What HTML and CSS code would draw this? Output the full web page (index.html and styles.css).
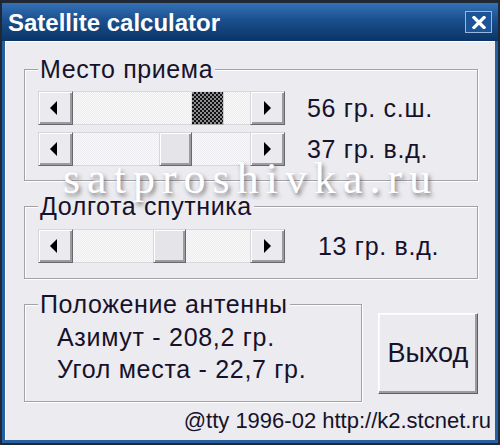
FILE: index.html
```html
<!DOCTYPE html>
<html lang="ru">

<head>
    <meta charset="UTF-8">
    <meta name="viewport" content="width=device-width, initial-scale=1.0">
    <title>Satellite calculator</title>
    <link rel="stylesheet" href="styles.css">
</head>

<body>
    <div class="window">
        <div class="titlebar">
            <span class="title">Satellite calculator</span>
            <span class="close">
                <svg width="14" height="13" viewBox="0 0 14 13">
                    <path d="M2 1.5 L12 11.5 M12 1.5 L2 11.5" stroke="#fff" stroke-width="3.2" stroke-linecap="square" />
                </svg>
            </span>
        </div>

        <div class="client">
            <fieldset class="group group-place">
                <legend>Место приема</legend>
                <div class="row">
                    <div class="scroll">
                        <span class="scroll-btn"><i class="arrow arrow-left"></i></span>
                        <span class="track"><span class="thumb thumb-focus" style="margin-left:118px"></span></span>
                        <span class="scroll-btn"><i class="arrow arrow-right"></i></span>
                    </div>
                    <span class="value">56 гр. с.ш.</span>
                </div>
                <div class="row">
                    <div class="scroll">
                        <span class="scroll-btn"><i class="arrow arrow-left"></i></span>
                        <span class="track"><span class="thumb" style="margin-left:86px"></span></span>
                        <span class="scroll-btn"><i class="arrow arrow-right"></i></span>
                    </div>
                    <span class="value">37 гр. в.д.</span>
                </div>
            </fieldset>

            <fieldset class="group group-sat">
                <legend>Долгота спутника</legend>
                <div class="row">
                    <div class="scroll">
                        <span class="scroll-btn"><i class="arrow arrow-left"></i></span>
                        <span class="track"><span class="thumb" style="margin-left:80px"></span></span>
                        <span class="scroll-btn"><i class="arrow arrow-right"></i></span>
                    </div>
                    <span class="value value-wide">13 гр. в.д.</span>
                </div>
            </fieldset>

            <div class="result">
                <fieldset class="group group-antenna">
                    <legend>Положение антенны</legend>
                    <div class="line">Азимут - 208,2 гр.</div>
                    <div class="line">Угол места - 22,7 гр.</div>
                </fieldset>
                <button class="exit" type="button">Выход</button>
            </div>

            <div class="footer">@tty 1996-02 http://k2.stcnet.ru</div>
        </div>

        <!-- надпись поверх окна -->
        <div class="watermark">satproshivka.ru</div>
    </div>
</body>

</html>
```

FILE: styles.css
```css
body {
    margin: 0;
    background: #fff;
}

.window {
    position: relative;
    width: 500px;
    height: 445px;
    box-sizing: border-box;
    display: flex;
    flex-direction: column;
    border: 2px solid #1f2834;
    border-top-width: 3px;
    background: #2660a0;
    font-family: "Liberation Sans", Arial, sans-serif;
    color: #16122c;
}

/* заголовок окна */
.titlebar {
    height: 38px;
    display: flex;
    align-items: center;
    justify-content: space-between;
    padding: 0 6px;
    background: linear-gradient(#3472b6, #1a4f8e 45%, #0b3466);
}

.title {
    font-size: 24px;
    font-weight: 700;
    color: #fff;
    padding-top: 2px;
}

.close {
    width: 25px;
    height: 20px;
    display: flex;
    align-items: center;
    justify-content: center;
    border: 1px solid #9ab8de;
    background: #1c5597;
}

.client {
    flex: 1;
    margin: 0 3px 3px;
    padding: 13px 17px 0 18px;
    background: #ecebef;
    border-top: 1px solid #fff;
    border-left: 1px solid #fff;
    box-sizing: border-box;
}

/* рамки групп */
.group {
    margin: 0;
    border: 1px solid #a3a1a7;
    box-shadow: 1px 1px 0 #fff, inset 1px 1px 0 #fff;
    padding: 8px 13px 14px;
}

.group legend {
    font-size: 25px;
    line-height: 28px;
    letter-spacing: 0.6px;
    padding: 0 2px;
    background: #ecebef;
}

.group-sat {
    margin-top: 11px;
    padding-top: 9px;
    padding-bottom: 15px;
}

.row {
    display: flex;
    align-items: center;
}

.row + .row {
    margin-top: 7px;
}

.value {
    font-size: 25px;
    letter-spacing: 0.7px;
    padding-left: 22px;
}

.value-wide {
    padding-left: 33px;
}

/* полоса прокрутки */
.scroll {
    display: flex;
    width: 247px;
    height: 34px;
}

.scroll-btn {
    width: 35px;
    box-sizing: border-box;
    display: flex;
    align-items: center;
    justify-content: center;
    background: #ebeaee;
    border: 1px solid;
    border-color: #d6d5d9 #69686d #69686d #d6d5d9;
    box-shadow: inset 1px 1px 0 #fff, inset -2px -2px 0 #9c9ba0;
}

.arrow {
    width: 0;
    height: 0;
    border-top: 7px solid transparent;
    border-bottom: 7px solid transparent;
}

.arrow-left {
    border-right: 7px solid #000;
    margin-right: 5px;
}

.arrow-right {
    border-left: 7px solid #000;
}

.track {
    flex: 1;
    display: flex;
    background: repeating-conic-gradient(#fbfbfc 0 25%, #ebeaee 0 50%) 0 0 / 2px 2px;
    border-top: 1px solid #d8d7db;
    border-bottom: 1px solid #d8d7db;
}

.thumb {
    width: 33px;
    box-sizing: border-box;
    margin-top: -1px;
    margin-bottom: -1px;
    background: #e5e4e9;
    border: 1px solid;
    border-color: #d6d5d9 #69686d #69686d #d6d5d9;
    box-shadow: inset 1px 1px 0 #fff, inset -2px -2px 0 #9c9ba0;
}

.thumb-focus {
    background: repeating-conic-gradient(#111 0 25%, #8d8c91 0 50%) 0 0 / 4px 4px;
    border-color: #e0dfe3 #cfced3 #a9a8ad #e0dfe3;
    box-shadow: none;
}

/* результат и кнопка */
.result {
    display: flex;
    align-items: flex-start;
    gap: 16px;
    margin-top: 11px;
}

.group-antenna {
    width: 340px;
    box-sizing: border-box;
    padding: 3px 13px 16px;
}

.line {
    font-size: 25px;
    line-height: 32px;
    letter-spacing: 0.7px;
    padding-left: 19px;
}

.exit {
    width: 101px;
    height: 81px;
    margin-top: 23px;
    font-family: "Liberation Sans", Arial, sans-serif;
    font-size: 27px;
    color: #16122c;
    background: #ebeaee;
    border: 1px solid;
    border-color: #fff #5f5e63 #5f5e63 #fff;
    box-shadow: inset -2px -2px 0 #9c9ba0, inset 1px 1px 0 #fafafa;
}

.footer {
    font-size: 22px;
    line-height: 24px;
    text-align: right;
    margin-top: 7px;
    margin-right: -13px;
}

.watermark {
    position: absolute;
    left: 61px;
    top: 154px;
    font-family: "Liberation Serif", "Times New Roman", serif;
    font-size: 44px;
    line-height: 44px;
    letter-spacing: 7px;
    color: #fff;
    text-shadow: 2px 3px 4px rgba(40, 40, 50, 0.55);
}
```
